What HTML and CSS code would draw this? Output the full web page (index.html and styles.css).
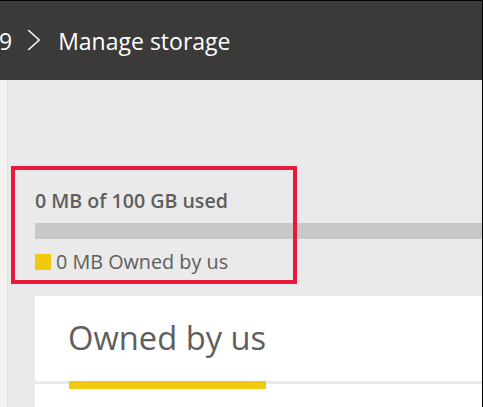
FILE: index.html
```html
<!DOCTYPE html>
<html lang="en">
<head>
<meta charset="utf-8">
<title>Manage storage</title>
<link rel="stylesheet" href="styles.css">
</head>
<body>
<div class="frame">
  <header class="topbar">
    <span class="crumb-prev">9</span>
    <svg class="chevron" width="14" height="22" viewBox="0 0 14 22" aria-hidden="true">
      <polyline points="1.2,1 12.2,11 1.2,21" fill="none" stroke="#ffffff" stroke-width="1.5"/>
    </svg>
    <span class="crumb-current">Manage storage</span>
  </header>
  <div class="main">
    <div class="rail"></div>
    <div class="content">
      <section class="usage">
        <div class="usage-title">0 MB of 100 GB used</div>
        <div class="usage-bar"></div>
        <div class="legend">
          <span class="legend-swatch"></span>
          <span class="legend-label">0 MB Owned by us</span>
        </div>
      </section>
      <section class="card">
        <div class="card-head">
          <h2 class="card-title">Owned by us</h2>
        </div>
        <div class="tab-indicator"></div>
      </section>
      <div class="highlight"></div>
    </div>
  </div>
</div>
</body>
</html>
```
FILE: styles.css
```css
html, body {
  margin: 0;
  padding: 0;
}
body {
  font-family: "Open Sans", "Noto Sans", sans-serif;
  background: #eaeaea;
}
.frame {
  width: 483px;
  height: 407px;
  box-sizing: border-box;
  border-top: 1px solid #000;
  border-right: 1px solid #000;
  overflow: hidden;
  display: flex;
  flex-direction: column;
}
.topbar {
  height: 79px;
  flex: none;
  background: #3b3a39;
  color: #ffffff;
  display: flex;
  align-items: center;
  font-size: 23px;
  line-height: 32px;
  white-space: nowrap;
}
.crumb-prev {
  margin-left: -1px;
}
.chevron {
  display: block;
  margin-left: 15px;
  margin-top: -2px;
}
.crumb-current {
  margin-left: 17px;
}
.main {
  flex: 1;
  display: flex;
  min-height: 0;
}
.rail {
  width: 7px;
  flex: none;
  background: #f3f2f1;
  border-right: 1px solid #e1dfdd;
}
.content {
  flex: 1;
  position: relative;
  background: #eaeaea;
  padding: 109px 0 0 27px;
  color: #605e5c;
}
.usage-title {
  font-size: 19.6px;
  font-weight: 600;
  line-height: 24px;
}
.usage-bar {
  height: 16px;
  margin-top: 10px;
  background: #c8c8c8;
}
.legend {
  margin-top: 11px;
  display: flex;
  align-items: center;
  gap: 5px;
  font-size: 19.8px;
  line-height: 24px;
}
.legend-swatch {
  width: 16px;
  height: 16px;
  background: #f2c811;
  flex: none;
}
.card {
  margin-top: 22px;
  background: #ffffff;
  height: 200px;
}
.card-head {
  padding: 20px 0 21px 33px;
  border-bottom: 3px solid #eaeaea;
}
.card-title {
  margin: 0;
  font-size: 32.7px;
  font-weight: 400;
  line-height: 44px;
  color: #605e5c;
}
.tab-indicator {
  width: 197px;
  height: 8px;
  margin-top: -3px;
  margin-left: 34px;
  background: #f2c811;
  position: relative;
}
.highlight {
  position: absolute;
  left: 3px;
  top: 86px;
  width: 278px;
  height: 110px;
  border: 4px solid #e8193c;
}
```
